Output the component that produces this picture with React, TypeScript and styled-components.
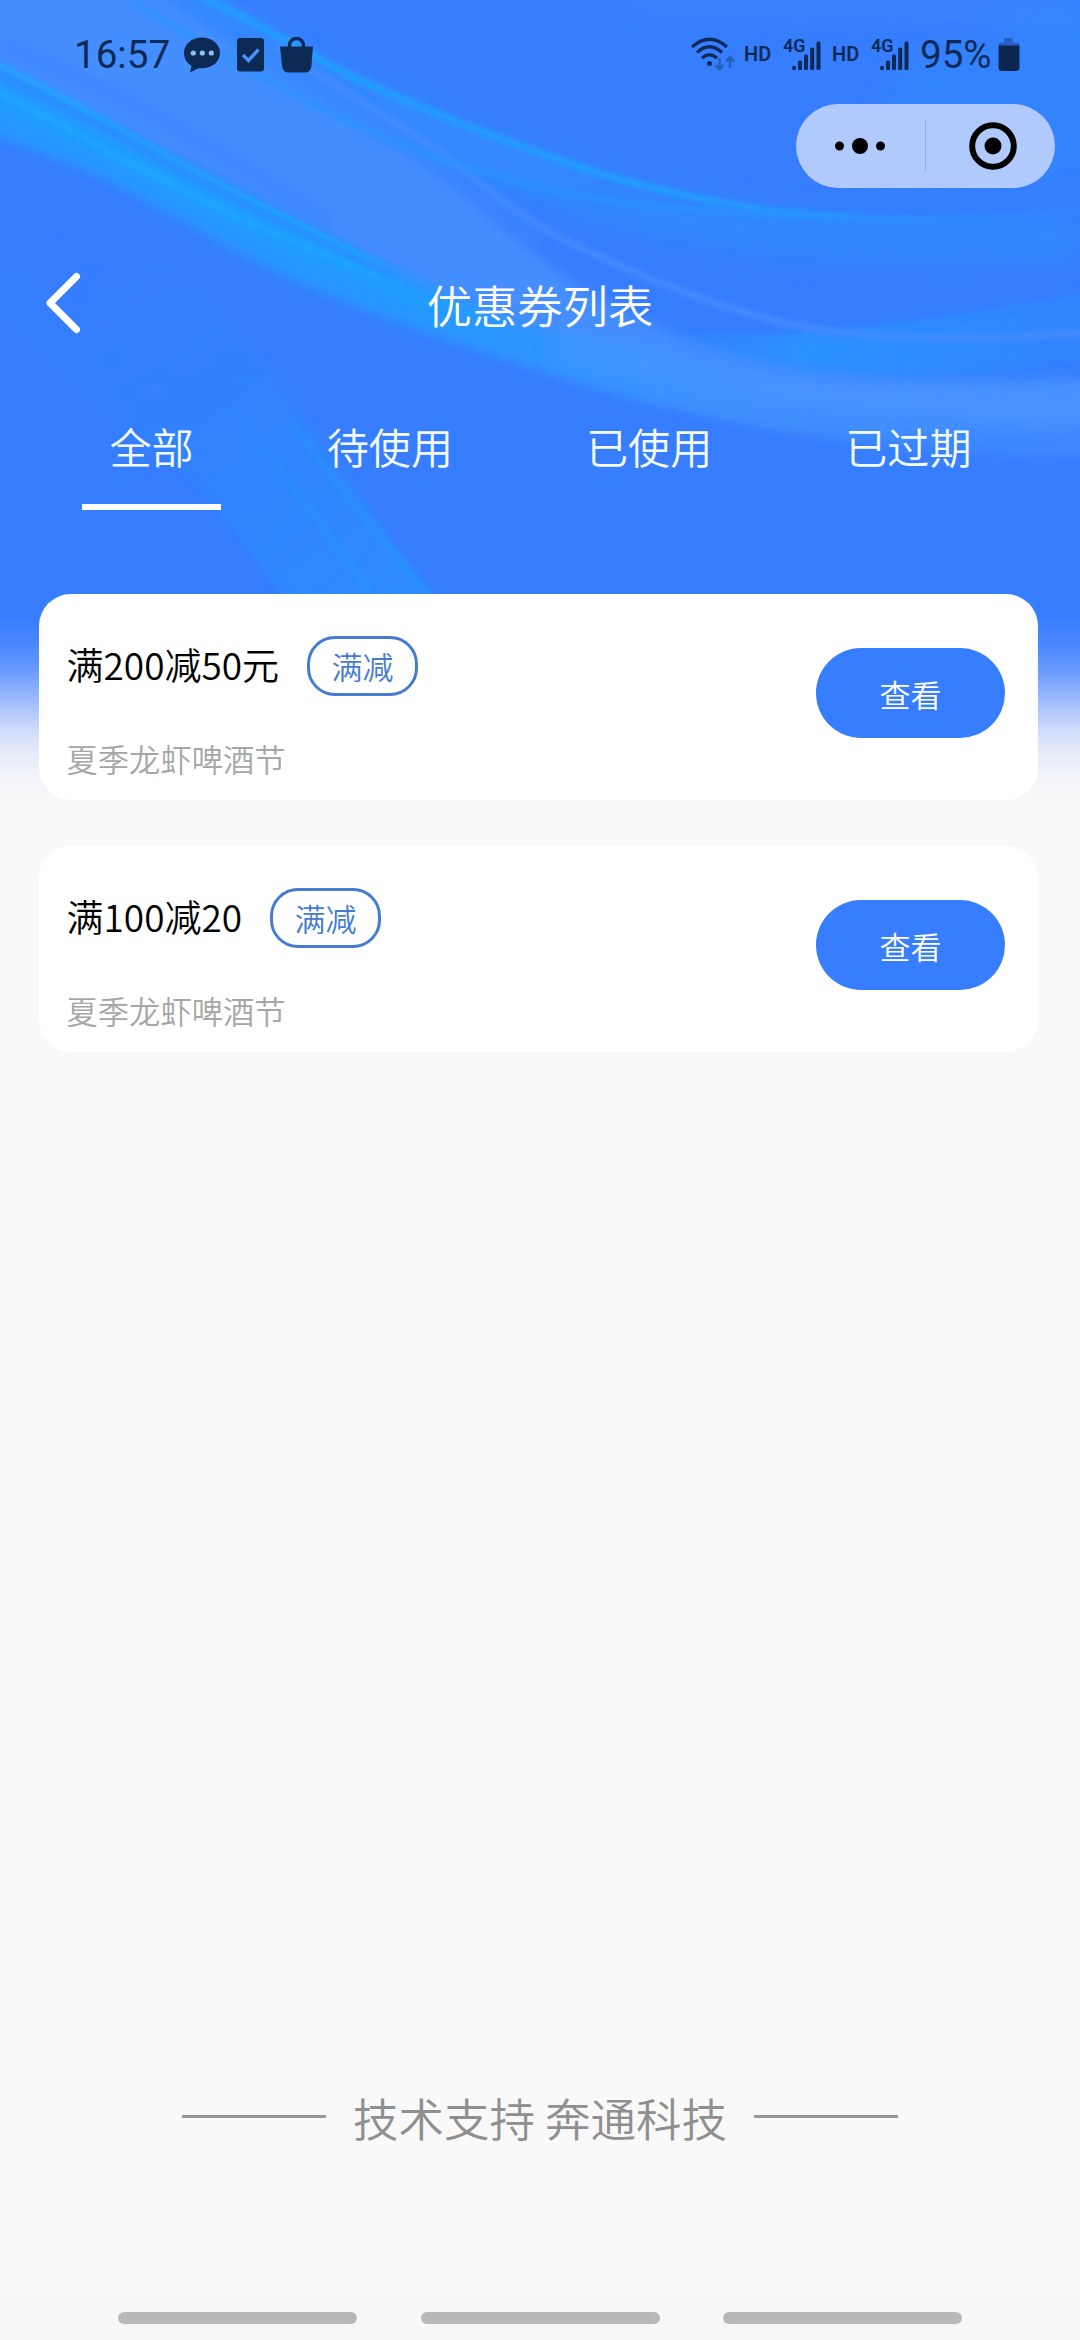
import React from "react";
import styled, { createGlobalStyle } from "styled-components";

const INK = "#0d2a55";
const BLUE = "#377dff";

const GlobalStyle = createGlobalStyle`
  *, *::before, *::after { box-sizing: border-box; }
  body {
    margin: 0;
    background: #f9f9f9;
    font-family: "Noto Sans CJK SC", "Noto Sans", sans-serif;
    font-weight: 350;
  }
`;

const Page = styled.div`
  position: relative;
  isolation: isolate;
  display: flex;
  flex-direction: column;
  width: 1080px;
  height: 2340px;
  overflow: hidden;
  background: #f9f9f9;
`;

const Backdrop = styled.div`
  position: absolute;
  inset: 0 0 auto 0;
  z-index: -1;
  height: 820px;
  background: linear-gradient(
    to bottom,
    ${BLUE} 0,
    ${BLUE} 614px,
    #4a87ff 645px,
    #6c9dfe 672px,
    #9dbbfb 700px,
    #ccdafa 728px,
    #e3eafa 750px,
    #f1f3fa 775px,
    #f8f9f9 802px,
    #f9f9f9 820px
  );

  svg {
    display: block;
  }
`;

const StatusBar = styled.header`
  display: flex;
  align-items: center;
  justify-content: space-between;
  height: 104px;
  padding: 5px 60px 0 74px;
  color: ${INK};
  font-family: Roboto, sans-serif;
  font-weight: 400;
`;

const StatusGroup = styled.div`
  display: flex;
  align-items: center;

  svg {
    display: block;
    flex: none;
  }
`;

const StatusText = styled.span<{ $width: number }>`
  width: ${(p) => p.$width}px;
  font-size: 38.6px;
  line-height: 46px;
  white-space: nowrap;
`;

const HdMark = styled.span`
  width: 39px;
  padding-bottom: 2px;
  font-size: 20px;
  font-weight: 600;
  line-height: 24px;
`;

const CapsuleRow = styled.div`
  display: flex;
  justify-content: flex-end;
  padding-right: 25px;
`;

const Capsule = styled.div`
  display: grid;
  grid-template-columns: 129px 1px 129px;
  align-items: center;
  width: 259px;
  height: 84px;
  border-radius: 42px;
  background: #b1cafd;
`;

const CapsuleButton = styled.button<{ $shift?: number }>`
  display: grid;
  place-items: center;
  height: 100%;
  padding: 0 0 0 ${(p) => p.$shift ?? 0}px;
  border: 0;
  background: none;
`;

const CapsuleDivider = styled.span`
  height: 52px;
  background: #98b3ea;
`;

const NavBar = styled.nav`
  display: grid;
  grid-template-columns: 120px 1fr 120px;
  align-items: center;
  height: 230px;
`;

const BackButton = styled.button`
  display: flex;
  padding: 0 0 0 42px;
  border: 0;
  background: none;
`;

const Title = styled.h1`
  margin: 0;
  padding-top: 1px;
  color: #fff;
  font-size: 45.3px;
  font-weight: inherit;
  line-height: 64px;
  text-align: center;
`;

const Tabs = styled.div`
  display: flex;
  gap: 78px;
  padding: 0 82px;
`;

const Tab = styled.button<{ $active?: boolean }>`
  height: 92px;
  padding: 0 27.5px 30px;
  border: 0;
  border-bottom: 6px solid ${(p) => (p.$active ? "#fff" : "transparent")};
  background: none;
  color: #f4fbff;
  font-family: inherit;
  font-size: 42.1px;
  font-weight: inherit;
  line-height: 56px;
  white-space: nowrap;
`;

const CouponList = styled.main`
  display: flex;
  flex-direction: column;
  gap: 46px;
  padding: 84px 42px 0 39px;
`;

const Card = styled.article`
  display: flex;
  align-items: flex-start;
  justify-content: space-between;
  height: 206px;
  padding: 0 33px 0 27.5px;
  border-radius: 32px;
  background: #fff;
`;

const CardBody = styled.div`
  padding-top: 42px;
`;

const CardHeading = styled.div`
  display: flex;
  align-items: center;
  gap: 28px;
  height: 60px;
`;

const CouponName = styled.h2`
  margin: 0;
  padding-bottom: 4px;
  color: #000;
  font-size: 37px;
  font-weight: inherit;
  line-height: 54px;
`;

const Badge = styled.span`
  display: grid;
  place-items: center;
  width: 111px;
  height: 60px;
  border: 3px solid #457cd2;
  border-radius: 28px;
  color: #457cd2;
  font-size: 31px;
  line-height: 46px;
`;

const CouponNote = styled.p`
  margin: 43px 0 0;
  color: #a6a6a6;
  font-size: 31.3px;
  line-height: 40px;
`;

const ViewButton = styled.button`
  width: 189px;
  height: 90px;
  margin-top: 54px;
  padding: 0;
  border: 0;
  border-radius: 45px;
  background: ${BLUE};
  color: #fff;
  font-family: inherit;
  font-size: 31px;
  font-weight: inherit;
  line-height: 92px;
`;

const Support = styled.footer`
  display: flex;
  align-items: center;
  justify-content: space-between;
  height: 66px;
  margin: auto 182px 147px;
  color: #8f8f8f;
  font-size: 45.5px;
  line-height: 66px;
`;

const SupportText = styled.span`
  padding-top: 2px;
`;

const Rule = styled.span`
  width: 144px;
  height: 3px;
  background: #979797;
`;

const GestureBar = styled.div`
  display: flex;
  flex: none;
  gap: 63.5px;
  height: 44px;
  padding: 16px 118px 0;
  background: #f7f7f7;
`;

const GestureHint = styled.span`
  flex: 1;
  height: 12px;
  border-radius: 6px;
  background: #b8b8b8;
`;

function Waves() {
  return (
    <svg width="1080" height="610" viewBox="0 0 1080 610" fill="none">
      <defs>
        <filter id="b1" filterUnits="userSpaceOnUse" x="-60" y="-60" width="1200" height="740">
          <feGaussianBlur stdDeviation="2.2" />
        </filter>
        <filter id="b5" filterUnits="userSpaceOnUse" x="-60" y="-60" width="1200" height="740">
          <feGaussianBlur stdDeviation="6" />
        </filter>
        <filter id="b12" filterUnits="userSpaceOnUse" x="-60" y="-60" width="1200" height="740">
          <feGaussianBlur stdDeviation="13" />
        </filter>
        <linearGradient id="cyanBand" gradientUnits="userSpaceOnUse" x1="0" y1="0" x2="1080" y2="0">
          <stop offset="0" stopColor="#2798ff" />
          <stop offset=".4" stopColor="#2898ff" />
          <stop offset=".55" stopColor="#3394ff" />
          <stop offset=".7" stopColor="#3f8eff" />
          <stop offset="1" stopColor="#428bff" />
        </linearGradient>
        <linearGradient id="cyanCore" gradientUnits="userSpaceOnUse" x1="0" y1="0" x2="620" y2="0">
          <stop offset="0" stopColor="#1fa0ff" />
          <stop offset=".7" stopColor="#1fa0ff" />
          <stop offset="1" stopColor="#2e96ff" stopOpacity="0" />
        </linearGradient>
        <linearGradient id="cyanLine" gradientUnits="userSpaceOnUse" x1="0" y1="0" x2="1080" y2="0">
          <stop offset="0" stopColor="#22a0ff" />
          <stop offset=".65" stopColor="#239cff" />
          <stop offset="1" stopColor="#2c88ff" stopOpacity=".4" />
        </linearGradient>
        <linearGradient id="edgeLine" gradientUnits="userSpaceOnUse" x1="0" y1="0" x2="450" y2="0">
          <stop offset="0" stopColor="#1ea8ff" />
          <stop offset=".8" stopColor="#1ea6ff" />
          <stop offset="1" stopColor="#2e96ff" stopOpacity="0" />
        </linearGradient>
        <linearGradient id="streak" gradientUnits="userSpaceOnUse" x1="120" y1="230" x2="380" y2="600">
          <stop offset="0" stopColor="#2f88ff" stopOpacity="0" />
          <stop offset=".4" stopColor="#2f88ff" stopOpacity=".6" />
          <stop offset="1" stopColor="#2a8fff" />
        </linearGradient>
        <linearGradient id="fineStreak" gradientUnits="userSpaceOnUse" x1="180" y1="350" x2="400" y2="600">
          <stop offset="0" stopColor="#2595ff" stopOpacity="0" />
          <stop offset="1" stopColor="#2396ff" />
        </linearGradient>
        <linearGradient id="patch" gradientUnits="userSpaceOnUse" x1="660" y1="0" x2="1080" y2="0">
          <stop offset="0" stopColor="#2797ff" stopOpacity="0" />
          <stop offset=".35" stopColor="#2797ff" />
          <stop offset="1" stopColor="#2f8aff" stopOpacity=".7" />
        </linearGradient>
      </defs>

      {/* soft tints around the upper ribbon */}
      <path d="M196 0C344 80 448 122 609 178C781 222 919 225 1080 210V262C860 268 700 262 560 210C400 158 260 80 110 0Z" fill="#3186ff" filter="url(#b12)" />
      <path d="M110 -20H200C344 72 448 118 609 174C560 196 480 180 400 150C300 110 200 50 110 -20Z" fill="#3488ff" opacity=".9" filter="url(#b5)" />
      <path d="M600 0H1080V36C930 8 800 20 740 16C680 20 630 12 600 0Z" fill="#3d88ff" opacity=".7" filter="url(#b12)" />
      <path d="M900 60C980 50 1040 20 1110 -20V170C1000 190 920 190 840 190Z" fill="#3186ff" opacity=".7" filter="url(#b12)" />
      <path d="M-20 180C60 260 120 340 190 478L80 420L-20 330Z" fill="#347fff" opacity=".7" filter="url(#b12)" />

      {/* pale ribbon */}
      <path d="M-50 -50H100C230 50 320 100 413 156C480 202 520 246 570 280C640 322 700 354 850 374C940 382 1020 380 1140 378V450C980 452 880 450 747 422C600 396 500 340 400 275C270 205 130 130 -50 50Z" fill="#448eff" filter="url(#b5)" />
      <path d="M0 44C120 92 220 150 330 222" stroke="#377fff" strokeWidth="14" opacity=".5" filter="url(#b5)" />

      {/* cyan ribbon */}
      <path d="M-60 46C40 84 115 130 172 163C250 200 300 220 361 260C400 280 470 310 560 332C640 350 700 360 760 380C840 400 960 420 1140 430V448C960 454 850 442 747 420C643 402 590 386 540 370C450 342 370 314 293 279C230 250 150 200 86 170C50 156 20 142 -60 118Z" fill="url(#cyanBand)" filter="url(#b5)" />
      <path d="M-40 88C60 118 140 164 230 214C310 252 400 290 500 324" stroke="url(#cyanCore)" strokeWidth="20" opacity=".6" filter="url(#b5)" />
      <path d="M0 76C100 122 170 168 275 218C320 238 350 254 390 272" stroke="#2b8eff" strokeWidth="8" opacity=".9" filter="url(#b1)" />
      <path d="M-10 61C40 84 96 115 172 158C220 184 320 236 440 291" stroke="url(#edgeLine)" strokeWidth="4.5" filter="url(#b1)" />
      <path d="M-10 88C60 124 100 148 138 166C190 194 300 250 440 298" stroke="url(#edgeLine)" strokeWidth="5" filter="url(#b1)" />
      <path d="M560 346C700 386 860 414 1120 404" stroke="#4896ff" strokeWidth="26" opacity=".75" filter="url(#b12)" />
      <path d="M800 440C900 446 1000 448 1120 434" stroke="#347dff" strokeWidth="6" opacity=".7" filter="url(#b5)" />
      <path d="M760 452C880 462 1000 462 1120 454" stroke="#4189ff" strokeWidth="5" opacity=".5" filter="url(#b5)" />

      {/* cyan patch at the right */}
      <path d="M660 334C740 336 810 340 867 329C940 322 1010 308 1130 286V358C1000 374 900 380 820 370C760 362 710 350 660 334Z" fill="url(#patch)" opacity=".8" filter="url(#b5)" />
      <path d="M650 330C720 338 800 340 867 330C940 322 1010 310 1100 293" stroke="url(#patch)" strokeWidth="4" opacity=".7" filter="url(#b1)" />

      {/* fine upper lines */}
      <path d="M255 46C360 110 430 156 540 240" stroke="#4089ff" strokeWidth="14" opacity=".5" filter="url(#b5)" />
      <path d="M275 46C330 82 370 106 413 134C470 170 500 204 550 232C620 268 700 302 780 322C860 340 950 342 1100 332" stroke="#468dff" strokeWidth="8" opacity=".7" filter="url(#b1)" />
      <path d="M131 0C200 44 240 66 275 84C320 108 370 134 413 149C460 166 500 178 540 188C600 202 700 214 850 218" stroke="#2795ff" strokeWidth="7" opacity=".6" filter="url(#b1)" />
      <path d="M186 -10C240 14 300 48 344 73C400 100 480 132 540 153C600 176 670 196 781 212C880 222 980 224 1100 208" stroke="url(#cyanLine)" strokeWidth="7" filter="url(#b1)" />

      {/* streaks running down to the first card */}
      <path d="M90 260L190 280C230 320 262 360 293 402C340 470 390 540 456 640H316C270 570 230 520 193 478C150 430 110 400 83 364Z" fill="url(#streak)" opacity=".7" filter="url(#b5)" />
      <path d="M110 394C150 436 193 478 230 520C255 552 275 580 298 612" stroke="url(#fineStreak)" strokeWidth="4" opacity=".8" filter="url(#b1)" />
      <path d="M230 405C290 480 340 550 390 620" stroke="url(#fineStreak)" strokeWidth="7" opacity=".7" filter="url(#b1)" />
      <path d="M290 420C340 486 390 545 446 620" stroke="url(#fineStreak)" strokeWidth="9" opacity=".7" filter="url(#b1)" />
    </svg>
  );
}

function ChatIcon() {
  return (
    <svg width="36" height="36" viewBox="0 0 36 36">
      <path d="M18 0.5C8 .5 0 7.200 0 15.700C0 21.500 3 26 7.500 28.700L6 35.500L14.500 31.200C28 32.500 36 24.500 36 15.700C36 7.200 28 .5 18 .5Z" fill={INK} />
      <circle cx="9.300" cy="16" r="2.600" fill="#8fc0ff" />
      <circle cx="18.300" cy="16" r="2.600" fill="#8fc0ff" />
      <circle cx="27.300" cy="16" r="2.600" fill="#8fc0ff" />
    </svg>
  );
}

function TaskIcon() {
  return (
    <svg width="27" height="34" viewBox="0 0 27 34">
      <rect width="27" height="33.500" rx="3" fill={INK} />
      <path d="M6 17L11.500 22.500L21.500 11.500" fill="none" stroke="#4a93ff" strokeWidth="3.400" />
    </svg>
  );
}

function BagIcon() {
  return (
    <svg width="33" height="36" viewBox="0 0 33 36">
      <path d="M9.500 10V8A7 6.500 0 0 1 23.500 8V10" fill="none" stroke={INK} strokeWidth="3.400" />
      <path d="M0 9.500H33L31.300 29.500Q30.500 35.500 25 35.500H8.500Q3 35.500 2.200 29.500Z" fill={INK} />
    </svg>
  );
}

const NoticeIcons = styled.div`
  display: flex;
  align-items: center;
  gap: 16.5px;
`;

function WifiIcon() {
  return (
    <svg width="53" height="36" viewBox="0 0 53 36" fill="none">
      <g stroke={INK} strokeWidth="3.200">
        <path d="M1 10Q18.500 -5.500 36 10" />
        <path d="M6 15.500Q18.500 4 31 15.500" />
        <path d="M11 21Q18.500 14.500 26 21" />
      </g>
      <circle cx="18.500" cy="26.500" r="2.500" fill={INK} />
      <path d="M28.500 21V32M24.500 28L28.500 32.500L32.500 28M39 31V20.500M35 24.500L39 20L43 24.500" stroke="#2861bd" strokeWidth="2.600" />
    </svg>
  );
}

function SignalIcon() {
  return (
    <svg width="49" height="42" viewBox="0 -3 49 42">
      <text x="0" y="14.500" fill={INK} fontFamily="Roboto, sans-serif" fontSize="18" fontWeight="600">
        4G
      </text>
      <g fill={INK}>
        <rect x="9" y="29" width="4" height="4" rx="1.500" />
        <rect x="15" y="23.500" width="4" height="9.500" rx="1.500" />
        <rect x="21" y="17.500" width="4" height="15.500" rx="1.500" />
        <rect x="27.200" y="10.500" width="4" height="22.500" rx="1.500" />
        <rect x="33.500" y="4.500" width="4" height="28.500" rx="1.500" />
      </g>
    </svg>
  );
}

function BatteryIcon() {
  return (
    <svg width="22" height="34" viewBox="0 0 22 34">
      <path d="M6 4.500V2Q6 0 8 0H13Q15 0 15 2V4.500H18Q21.500 4.500 21.500 8H.5Q.5 4.500 4 4.500Z" fill="#275fc4" />
      <path d="M.5 7.500H21.500V29.500Q21.500 33 18 33H4Q.5 33 .5 29.500Z" fill="#0c264f" />
    </svg>
  );
}

const tabs = ["全部", "待使用", "已使用", "已过期"];

const coupons = [
  { name: "满200减50元", kind: "满减", note: "夏季龙虾啤酒节" },
  { name: "满100减20", kind: "满减", note: "夏季龙虾啤酒节" },
];

export default function App() {
  return (
    <>
      <GlobalStyle />
      <Page>
        <Backdrop>
          <Waves />
        </Backdrop>

        <StatusBar>
          <StatusGroup>
            <StatusText $width={110}>16:57</StatusText>
            <NoticeIcons>
              <ChatIcon />
              <TaskIcon />
              <BagIcon />
            </NoticeIcons>
          </StatusGroup>
          <StatusGroup>
            <WifiIcon />
            <HdMark>HD</HdMark>
            <SignalIcon />
            <HdMark>HD</HdMark>
            <SignalIcon />
            <StatusText $width={78}>95%</StatusText>
            <BatteryIcon />
          </StatusGroup>
        </StatusBar>

        <CapsuleRow>
          <Capsule>
            <CapsuleButton aria-label="更多">
              <svg width="52" height="18" viewBox="0 0 52 18">
                <circle cx="4.500" cy="9" r="4.500" />
                <circle cx="25" cy="9" r="8" />
                <circle cx="45.500" cy="9" r="4.500" />
              </svg>
            </CapsuleButton>
            <CapsuleDivider />
            <CapsuleButton aria-label="关闭" $shift={5}>
              <svg width="48" height="48" viewBox="0 0 48 48">
                <circle cx="24" cy="24" r="20.800" fill="none" stroke="#000" strokeWidth="6" />
                <circle cx="24" cy="24" r="8.500" />
              </svg>
            </CapsuleButton>
          </Capsule>
        </CapsuleRow>

        <NavBar>
          <BackButton aria-label="返回">
            <svg width="42" height="62" viewBox="0 0 42 62" fill="none">
              <path d="M34.500 4.500L8 31L34.500 57.500" stroke="#fff" strokeWidth="7" strokeLinecap="round" strokeLinejoin="round" />
            </svg>
          </BackButton>
          <Title>优惠券列表</Title>
        </NavBar>

        <Tabs>
          {tabs.map((label, i) => (
            <Tab key={label} $active={i === 0}>
              {label}
            </Tab>
          ))}
        </Tabs>

        <CouponList>
          {coupons.map((c) => (
            <Card key={c.name}>
              <CardBody>
                <CardHeading>
                  <CouponName>{c.name}</CouponName>
                  <Badge>{c.kind}</Badge>
                </CardHeading>
                <CouponNote>{c.note}</CouponNote>
              </CardBody>
              <ViewButton>查看</ViewButton>
            </Card>
          ))}
        </CouponList>

        <Support>
          <Rule />
          <SupportText>技术支持 奔通科技</SupportText>
          <Rule />
        </Support>

        <GestureBar>
          <GestureHint />
          <GestureHint />
          <GestureHint />
        </GestureBar>
      </Page>
    </>
  );
}
